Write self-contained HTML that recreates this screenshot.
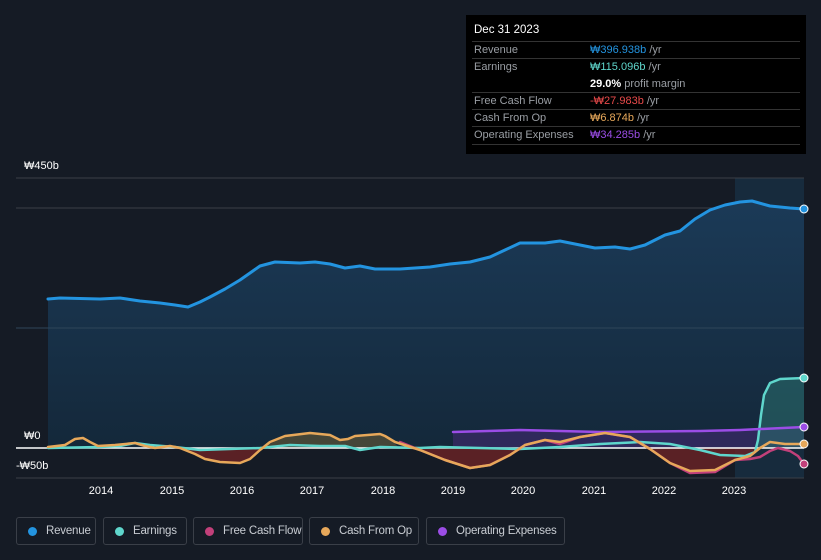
<!DOCTYPE html><html><head><meta charset="utf-8"><style>
body{margin:0;width:821px;height:560px;background:#151b25;font-family:"Liberation Sans","Noto Sans CJK KR",sans-serif;overflow:hidden;position:relative}
.tt{position:absolute;left:466px;top:15px;width:340px;height:139px;background:#000;color:#9a9ea4;font-size:11px}
.tt .h{position:absolute;left:8px;top:9px;color:#fff;font-size:11.5px}
.row{position:absolute;left:6px;width:328px;border-top:1px solid #333;height:17px}
.row span{position:absolute;top:2px;white-space:nowrap}
.l{left:2px}.v{left:118px}
.leg{position:absolute;top:517px;height:28px;border:1px solid #3a3f48;border-radius:3px;color:#c8ccd2;font-size:11.5px;line-height:27px;box-sizing:border-box;padding-left:29px;white-space:nowrap;overflow:hidden;letter-spacing:-0.2px}
.leg i{position:absolute;left:11px;top:9px;width:9px;height:9px;border-radius:50%}
.ax{position:absolute;font-size:11px;color:#fff}
.yr{position:absolute;top:485px;font-size:11px;color:#fff;width:40px;text-align:center}
</style></head><body>
<svg width="821" height="560" style="position:absolute;left:0;top:0">
<defs><linearGradient id="rg" x1="0" y1="0" x2="0" y2="1"><stop offset="0" stop-color="#1b3a57"/><stop offset="1" stop-color="#14283a"/></linearGradient></defs>
<rect x="735" y="178" width="69" height="300" fill="#1a3b55" opacity="0.5"/>
<line x1="16" y1="178" x2="804" y2="178" stroke="#3a3f48"/>
<line x1="16" y1="208" x2="804" y2="208" stroke="#3a3f48"/>
<path d="M48,299 L60,298 L100,299 L120,298 L140,301 L160,303 L175,305 L188,307 L200,302 L210,297 L225,289 L240,280 L250,273 L260,266 L275,262 L300,263 L315,262 L330,264 L345,268 L360,266 L375,269 L400,269 L430,267 L450,264 L470,262 L490,257 L505,250 L520,243 L545,243 L560,241 L575,244 L595,248 L615,247 L630,249 L645,245 L665,235 L680,231 L695,219 L710,210 L725,205 L740,202 L752,201 L770,206 L790,208 L804,209 L804,448 L48,448Z" fill="url(#rg)" stroke-linejoin="round"/>
<line x1="16" y1="328" x2="804" y2="328" stroke="#2f4559"/>
<path d="M453,432 L520,430 L600,432 L700,431 L740,430 L804,427 L804,448 L453,448Z" fill="#3a2a6a" opacity="0.7"/>
<path d="M757,448 L760,420 L763,395 L768,384 L780,379 L804,378 L804,448Z" fill="#2a6a6a" opacity="0.6"/>
<path d="M400,448 L420,450 L445,460 L470,468 L490,465 L510,455 L525,448Z M645,448 L650,449 L670,463 L690,473 L715,472 L735,460 L750,457 L760,448Z M185,448 L205,459 L240,463 L255,455 L262,448Z" fill="#6b2326" opacity="0.8"/>
<path d="M262,448 L285,436 L310,433 L330,434 L340,440 L355,435 L380,434 L390,440 L400,448Z" fill="#5a5238" opacity="0.7"/>
<line x1="16" y1="448" x2="804" y2="448" stroke="#ffffff" stroke-width="1.5"/>
<line x1="16" y1="478" x2="804" y2="478" stroke="#3a3f48"/>
<g fill="none" stroke-linejoin="round" stroke-linecap="round">
<path d="M48,448 L100,447 L120,446 L135,443 L150,445 L175,447 L200,450 L260,448 L290,445 L320,446 L345,446 L360,450 L380,447 L420,448 L440,447 L480,448 L520,449 L560,447 L600,444 L640,442 L670,444 L700,450 L720,455 L745,456 L755,452 L758,440 L761,415 L764,395 L770,383 L780,379 L804,378" stroke="#5fd6cc" stroke-width="2.5"/>
<path d="M453,432 L520,430 L600,432 L700,431 L740,430 L804,427" stroke="#9b4de6" stroke-width="2.5"/>
<path d="M400,442 L420,450 L445,460 L470,468 L490,465 L510,455 L525,445 L545,440 L560,444 L580,437 L605,433 L630,437 L650,449 L670,463 L690,473 L715,472 L735,460 L750,459 L760,457 L770,451 L778,448 L790,451 L798,456 L804,464" stroke="#c2407a" stroke-width="2.5"/>
<path d="M48,447 L65,445 L75,439 L83,438 L90,442 L98,446 L115,445 L135,443 L145,446 L155,448 L170,446 L180,448 L195,454 L205,459 L220,462 L240,463 L250,459 L260,450 L270,442 L285,436 L310,433 L330,435 L340,440 L348,439 L355,436 L380,434 L385,436 L395,442 L420,450 L445,460 L470,468 L490,465 L510,455 L525,445 L545,440 L560,442 L580,437 L605,433 L630,437 L650,449 L670,463 L690,471 L715,470 L735,460 L750,456 L760,448 L770,442 L785,444 L804,444" stroke="#e7a85a" stroke-width="2.5"/>
<path d="M48,299 L60,298 L100,299 L120,298 L140,301 L160,303 L175,305 L188,307 L200,302 L210,297 L225,289 L240,280 L250,273 L260,266 L275,262 L300,263 L315,262 L330,264 L345,268 L360,266 L375,269 L400,269 L430,267 L450,264 L470,262 L490,257 L505,250 L520,243 L545,243 L560,241 L575,244 L595,248 L615,247 L630,249 L645,245 L665,235 L680,231 L695,219 L710,210 L725,205 L740,202 L752,201 L770,206 L790,208 L804,209" stroke="#2394e0" stroke-width="3"/>
</g>
<circle cx="804" cy="209" r="4" fill="#2394e0" stroke="#fff"/>
<circle cx="804" cy="378" r="4" fill="#5fd6cc" stroke="#fff"/>
<circle cx="804" cy="427" r="4" fill="#9b4de6" stroke="#fff"/>
<circle cx="804" cy="444" r="4" fill="#e7a85a" stroke="#fff"/>
<circle cx="804" cy="464" r="4" fill="#c2407a" stroke="#fff"/>
</svg>
<div class="ax" style="left:24px;top:160px">₩450b</div>
<div class="ax" style="left:24px;top:430px">₩0</div>
<div class="ax" style="left:16px;top:460px">-₩50b</div>
<div class="yr" style="left:81px">2014</div><div class="yr" style="left:152px">2015</div><div class="yr" style="left:222px">2016</div><div class="yr" style="left:292px">2017</div><div class="yr" style="left:363px">2018</div><div class="yr" style="left:433px">2019</div><div class="yr" style="left:503px">2020</div><div class="yr" style="left:574px">2021</div><div class="yr" style="left:644px">2022</div><div class="yr" style="left:714px">2023</div>
<div class="tt"><div class="h">Dec 31 2023</div>
<div class="row" style="top:26px"><span class="l">Revenue</span><span class="v"><b style="color:#2394e0;font-weight:normal">₩396.938b</b> /yr</span></div>
<div class="row" style="top:43px;height:34px"><span class="l">Earnings</span><span class="v"><b style="color:#5fd6cc;font-weight:normal">₩115.096b</b> /yr</span><span class="v" style="top:19px"><b style="color:#fff">29.0%</b> profit margin</span></div>
<div class="row" style="top:77px"><span class="l">Free Cash Flow</span><span class="v"><b style="color:#e84a4a;font-weight:normal">-₩27.983b</b> /yr</span></div>
<div class="row" style="top:94px"><span class="l">Cash From Op</span><span class="v"><b style="color:#e7a85a;font-weight:normal">₩6.874b</b> /yr</span></div>
<div class="row" style="top:111px;border-bottom:1px solid #333"><span class="l">Operating Expenses</span><span class="v"><b style="color:#9b4de6;font-weight:normal">₩34.285b</b> /yr</span></div>
</div>
<div class="leg" style="left:16px;width:80px"><i style="background:#2394e0"></i>Revenue</div>
<div class="leg" style="left:103px;width:84px"><i style="background:#5fd6cc"></i>Earnings</div>
<div class="leg" style="left:193px;width:110px"><i style="background:#c2407a"></i>Free Cash Flow</div>
<div class="leg" style="left:309px;width:110px"><i style="background:#e7a85a"></i>Cash From Op</div>
<div class="leg" style="left:426px;width:139px"><i style="background:#9b4de6"></i>Operating Expenses</div>
</body></html>
